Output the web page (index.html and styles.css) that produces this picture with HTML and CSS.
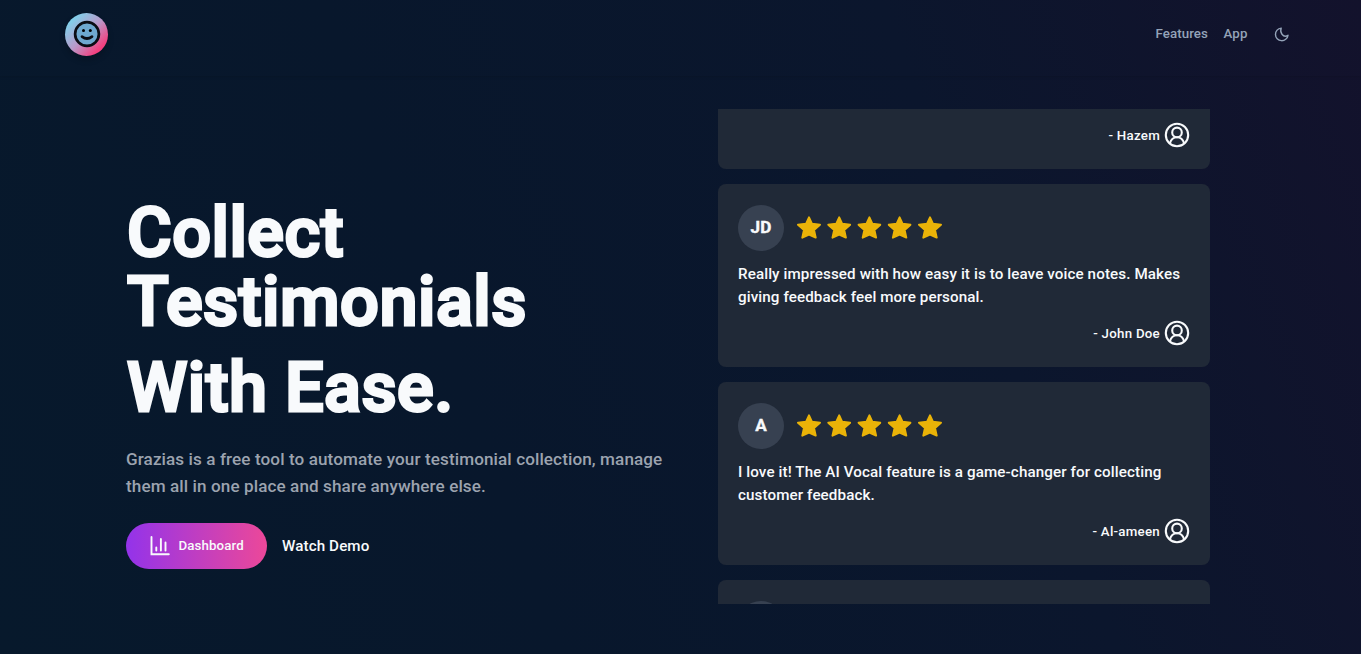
FILE: index.html
```html
<!DOCTYPE html>
<html lang="en">
<head>
  <meta charset="UTF-8">
  <title>Grazias</title>
  <meta name="viewport" content="width=device-width, initial-scale=1.0">
  <link rel="stylesheet" href="styles.css">
</head>
<body>

<!-- shared icons -->
<svg class="sprite">
  <symbol id="star" viewBox="0 0 24 24">
    <path d="M12 1.400l3 6.400 8 .9-6 5.200 1.700 7.700L12 18.600l-6.700 3L7 13.900 1 8.700l8-.9z" stroke="currentColor" stroke-width="2" stroke-linejoin="round"/>
  </symbol>
  <symbol id="stars" viewBox="0 0 146 24">
    <use href="#star" x="0" width="24" height="24"/>
    <use href="#star" x="30.200" width="24" height="24"/>
    <use href="#star" x="60.400" width="24" height="24"/>
    <use href="#star" x="90.600" width="24" height="24"/>
    <use href="#star" x="121" width="24" height="24"/>
  </symbol>
  <symbol id="user" viewBox="0 0 26 26">
    <g fill="none" stroke="currentColor" stroke-width="2.100">
      <circle cx="13" cy="13" r="11.200"/>
      <circle cx="13" cy="10.400" r="4.800"/>
      <path d="M5.800 21.400C7 17.400 9.500 15.200 13 15.200s6 2.200 7.200 6.200"/>
    </g>
  </symbol>
</svg>

<header class="navbar">
  <a class="logo" href="#">
    <svg width="28" height="28" viewBox="0 0 28 28">
      <circle cx="14" cy="14" r="11.900" fill="#6ea8cf" stroke="#0b0d14" stroke-width="2.700"/>
      <circle cx="10.500" cy="10.600" r="1.500"/>
      <circle cx="17.300" cy="10.600" r="1.500"/>
      <path d="M9 16.600q5 3.800 10 0" fill="none" stroke="#0b0d14" stroke-width="2.700" stroke-linecap="round"/>
    </svg>
  </a>
  <nav class="links">
    <a href="#">Features</a>
    <a href="#">App</a>
    <button class="theme-toggle" aria-label="Toggle theme">
      <svg width="15" height="15" viewBox="0 0 15 15">
        <path d="M7.200 1.100A6.300 6.300 0 1 0 14 8.300C11.800 9.700 9.300 9 8 7.300 6.600 5.500 6.500 3 7.200 1.100z" fill="none" stroke="currentColor" stroke-width="1.400" stroke-linejoin="round"/>
      </svg>
    </button>
  </nav>
</header>

<main class="hero">
  <section class="intro">
    <h1><span>Collect Testimonials</span> <span class="second">With Ease.</span></h1>
    <p>Grazias is a free tool to automate your testimonial collection, manage them all in one place and share anywhere else.</p>
    <div class="actions">
      <a class="btn" href="#">
        <svg width="20" height="20" viewBox="0 0 20 20" fill="none" stroke="currentColor" stroke-width="1.900" stroke-linecap="round">
          <path d="M1.500 1v17.300h17.300M6.300 11.500v3M10.900 3v11.500M15.500 6.500v8"/>
        </svg>
        Dashboard
      </a>
      <a class="demo" href="#">Watch Demo</a>
    </div>
  </section>

  <section class="testimonials">
    <article class="card">
      <div class="author"><span>- Hazem</span> <svg class="user"><use href="#user"/></svg></div>
    </article>
    <article class="card">
      <div class="rating">
        <div class="avatar">JD</div>
        <svg class="stars"><use href="#stars"/></svg>
      </div>
      <p>Really impressed with how easy it is to leave voice notes. Makes giving feedback feel more personal.</p>
      <div class="author"><span>- John Doe</span> <svg class="user"><use href="#user"/></svg></div>
    </article>
    <article class="card">
      <div class="rating">
        <div class="avatar">A</div>
        <svg class="stars"><use href="#stars"/></svg>
      </div>
      <p>I love it! The AI Vocal feature is a game-changer for collecting customer feedback.</p>
      <div class="author"><span>- Al-ameen</span> <svg class="user"><use href="#user"/></svg></div>
    </article>
    <article class="card">
      <div class="rating">
        <div class="avatar"></div>
      </div>
    </article>
  </section>
</main>

</body>
</html>
```
FILE: styles.css
```css
* {
  box-sizing: border-box;
}

body {
  margin: 0;
  height: 654px;
  overflow: hidden;
  font-family: Roboto, sans-serif;
  font-size: 15.2px;
  font-weight: 500;
  line-height: 1.5;
  letter-spacing: 0.1px;
  color: #f8fafc;
  background: linear-gradient(70deg, #07192c 0%, #08172c 35%, #0b162d 70%, #13122c 100%);
}

a {
  color: inherit;
  text-decoration: none;
}

h1, p {
  margin: 0;
}

.sprite {
  display: none;
}

/* navbar */
.navbar {
  display: flex;
  align-items: center;
  justify-content: space-between;
  height: 76px;
  padding: 0 64px 8px 65px;
  box-shadow: 0 1px 3px rgba(0, 0, 0, 0.12);
}

.logo {
  display: flex;
  align-items: center;
  justify-content: center;
  width: 43px;
  height: 43px;
  border-radius: 50%;
  background: linear-gradient(135deg, #67e8f9 0%, #b99aca 50%, #f4407f 82%);
  box-shadow: 0 4px 6px rgba(0, 0, 0, 0.2);
}

.links {
  display: flex;
  align-items: center;
  gap: 15.5px;
  font-size: 13.3px;
  color: #94a3b8;
}

.theme-toggle {
  display: flex;
  margin-left: 3px;
  padding: 8px;
  border: none;
  background: none;
  color: inherit;
}

/* hero */
.hero {
  display: flex;
  padding: 33px 151px 0 126px;
}

.intro {
  width: 592px;
  padding-top: 90px;
}

h1 {
  padding-left: 1px;
  font-size: 68.4px;
  line-height: 69px;
  font-weight: 500;
  letter-spacing: 0.5px;
  -webkit-text-stroke: 3px #f8fafc;
}

h1 span {
  display: block;
  width: 480px;
}

h1 .second {
  margin-top: 17px;
}

.intro p {
  width: 550px;
  margin-top: 23px;
  font-size: 17.1px;
  line-height: 26.6px;
  color: #9ca3af;
}

.actions {
  display: flex;
  align-items: center;
  gap: 15px;
  margin-top: 24px;
}

.btn {
  display: flex;
  align-items: center;
  gap: 8.5px;
  width: 141px;
  height: 46px;
  padding-left: 24px;
  border-radius: 23px;
  font-size: 13.3px;
  background: linear-gradient(to right, #9333ea, #ec4899);
}

/* testimonials */
.testimonials {
  display: flex;
  flex-direction: column;
  gap: 15px;
  width: 492px;
  height: 495px;
  overflow: hidden;
}

.card {
  flex: none;
  height: 183px;
  padding: 21px 20px;
  border-radius: 8px;
  background: #202937;
}

.card:first-child {
  height: 60px;
  padding-top: 13px;
  border-radius: 0 0 8px 8px;
}

.rating {
  display: flex;
  align-items: center;
  gap: 13px;
  height: 46px;
}

.avatar {
  width: 46px;
  height: 46px;
  border-radius: 50%;
  background: #374151;
  font-size: 17.1px;
  line-height: 45px;
  font-weight: 700;
  text-align: center;
  -webkit-text-stroke: 0.4px #f8fafc;
}

.stars {
  width: 146px;
  height: 24px;
  fill: #eab308;
  color: #eab308;
}

.card p {
  margin-top: 12px;
  line-height: 23px;
}

.author {
  display: flex;
  align-items: center;
  justify-content: flex-end;
  gap: 4px;
  font-size: 13.3px;
  line-height: 22px;
  letter-spacing: 0.25px;
}

.author span {
  padding-top: 2px;
}

.card p + .author {
  margin-top: 11px;
}

.user {
  width: 26px;
  height: 26px;
}
```
